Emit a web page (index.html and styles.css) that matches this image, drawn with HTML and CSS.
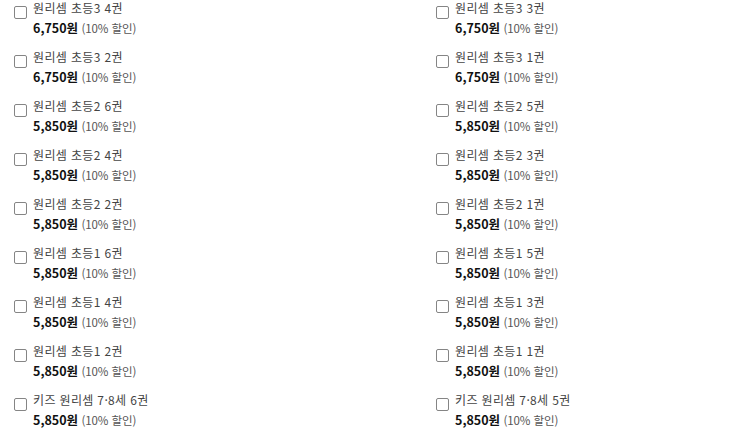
FILE: index.html
```html
<!DOCTYPE html>
<html lang="ko">
<head>
<meta charset="utf-8">
<link rel="stylesheet" href="styles.css">
</head>
<body>
<ul class="list">
  <li class="item"><span class="box"></span><div class="info"><div class="title">원리셈 초등3 4권</div><div class="price"><b>6,750원</b> <span class="dc">(10% 할인)</span></div></div></li>
  <li class="item"><span class="box"></span><div class="info"><div class="title">원리셈 초등3 3권</div><div class="price"><b>6,750원</b> <span class="dc">(10% 할인)</span></div></div></li>
  <li class="item"><span class="box"></span><div class="info"><div class="title">원리셈 초등3 2권</div><div class="price"><b>6,750원</b> <span class="dc">(10% 할인)</span></div></div></li>
  <li class="item"><span class="box"></span><div class="info"><div class="title">원리셈 초등3 1권</div><div class="price"><b>6,750원</b> <span class="dc">(10% 할인)</span></div></div></li>
  <li class="item"><span class="box"></span><div class="info"><div class="title">원리셈 초등2 6권</div><div class="price"><b>5,850원</b> <span class="dc">(10% 할인)</span></div></div></li>
  <li class="item"><span class="box"></span><div class="info"><div class="title">원리셈 초등2 5권</div><div class="price"><b>5,850원</b> <span class="dc">(10% 할인)</span></div></div></li>
  <li class="item"><span class="box"></span><div class="info"><div class="title">원리셈 초등2 4권</div><div class="price"><b>5,850원</b> <span class="dc">(10% 할인)</span></div></div></li>
  <li class="item"><span class="box"></span><div class="info"><div class="title">원리셈 초등2 3권</div><div class="price"><b>5,850원</b> <span class="dc">(10% 할인)</span></div></div></li>
  <li class="item"><span class="box"></span><div class="info"><div class="title">원리셈 초등2 2권</div><div class="price"><b>5,850원</b> <span class="dc">(10% 할인)</span></div></div></li>
  <li class="item"><span class="box"></span><div class="info"><div class="title">원리셈 초등2 1권</div><div class="price"><b>5,850원</b> <span class="dc">(10% 할인)</span></div></div></li>
  <li class="item"><span class="box"></span><div class="info"><div class="title">원리셈 초등1 6권</div><div class="price"><b>5,850원</b> <span class="dc">(10% 할인)</span></div></div></li>
  <li class="item"><span class="box"></span><div class="info"><div class="title">원리셈 초등1 5권</div><div class="price"><b>5,850원</b> <span class="dc">(10% 할인)</span></div></div></li>
  <li class="item"><span class="box"></span><div class="info"><div class="title">원리셈 초등1 4권</div><div class="price"><b>5,850원</b> <span class="dc">(10% 할인)</span></div></div></li>
  <li class="item"><span class="box"></span><div class="info"><div class="title">원리셈 초등1 3권</div><div class="price"><b>5,850원</b> <span class="dc">(10% 할인)</span></div></div></li>
  <li class="item"><span class="box"></span><div class="info"><div class="title">원리셈 초등1 2권</div><div class="price"><b>5,850원</b> <span class="dc">(10% 할인)</span></div></div></li>
  <li class="item"><span class="box"></span><div class="info"><div class="title">원리셈 초등1 1권</div><div class="price"><b>5,850원</b> <span class="dc">(10% 할인)</span></div></div></li>
  <li class="item"><span class="box"></span><div class="info"><div class="title">키즈 원리셈 7·8세 6권</div><div class="price"><b>5,850원</b> <span class="dc">(10% 할인)</span></div></div></li>
  <li class="item"><span class="box"></span><div class="info"><div class="title">키즈 원리셈 7·8세 5권</div><div class="price"><b>5,850원</b> <span class="dc">(10% 할인)</span></div></div></li>
</ul>
</body>
</html>
```
FILE: styles.css
```css
html, body {
  margin: 0;
  padding: 0;
  background: #fff;
}
body {
  font-family: "Noto Sans CJK KR", "Noto Sans", sans-serif;
  color: #222;
}
.list {
  list-style: none;
  margin: 0;
  padding: 0 0 0 14px;
  display: grid;
  grid-template-columns: 422px 300px;
  row-gap: 13px;
}
.item {
  display: flex;
  align-items: flex-start;
}
.box {
  flex: none;
  width: 11px;
  height: 11px;
  border: 1px solid #858585;
  border-radius: 2px;
  margin-top: 6px;
  margin-right: 6px;
}
.info {
  display: flex;
  flex-direction: column;
  gap: 4px;
}
.title {
  font-size: 12px;
  line-height: 16px;
  color: #444;
  letter-spacing: 0.35px;
}
.price {
  font-size: 12px;
  line-height: 16px;
}
.price b {
  font-size: 12.5px;
  font-weight: bold;
  color: #111;
}
.dc {
  color: #555;
  font-size: 11.5px;
  letter-spacing: -0.1px;
}
```
